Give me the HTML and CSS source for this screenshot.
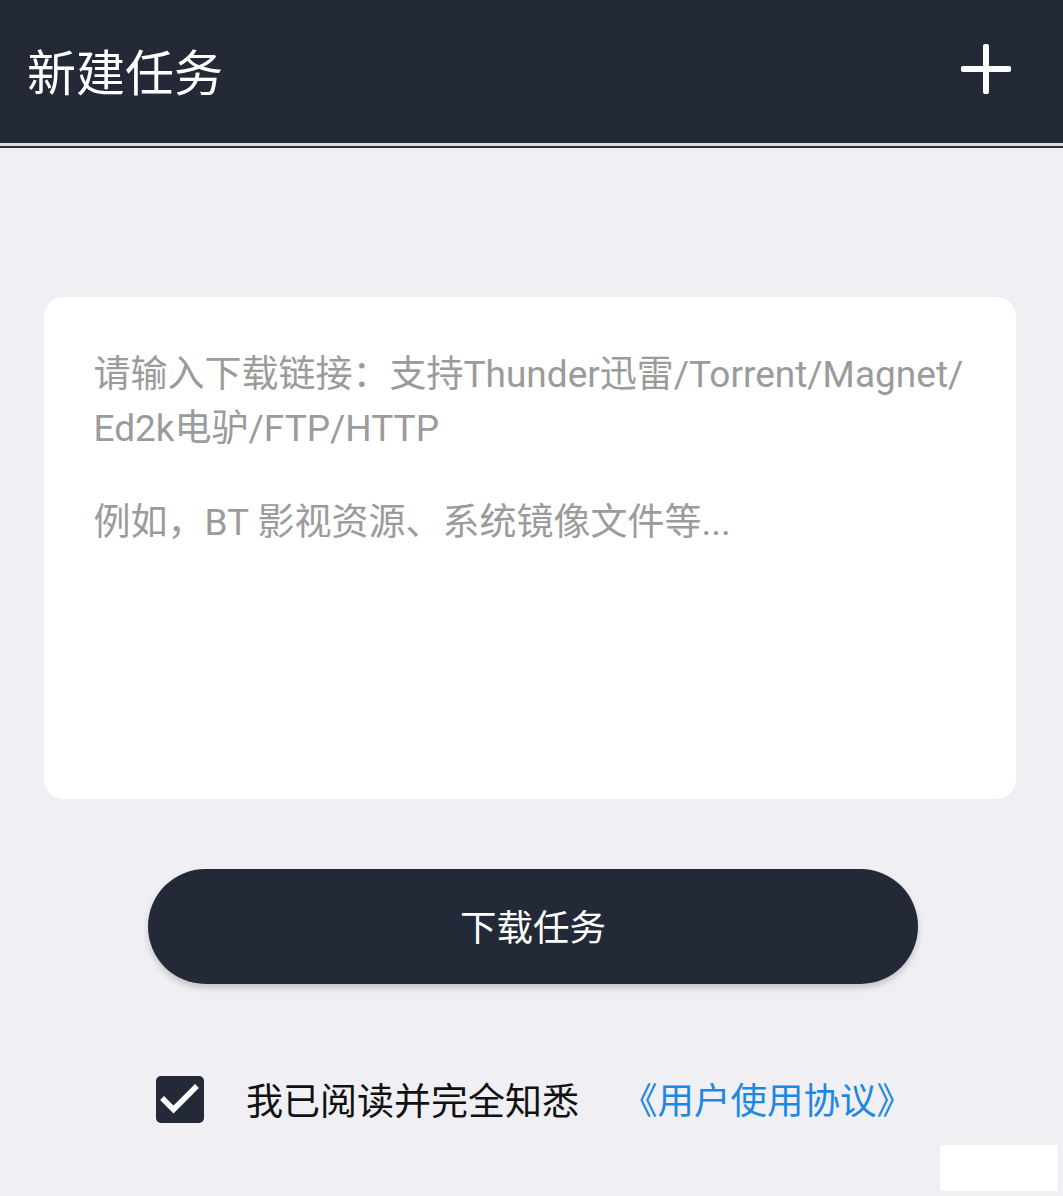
FILE: index.html
```html
<!DOCTYPE html>
<html lang="zh-CN">
<head>
<meta charset="utf-8">
<title>新建任务</title>
<link rel="stylesheet" href="styles.css">
</head>
<body>
<header class="topbar">
  <h1 class="title">新建任务</h1>
  <button class="add-btn" aria-label="添加">
    <svg width="50" height="50" viewBox="0 0 50 50"><path d="M25 2.5V47.5M2.5 25H47.5" stroke="#fff" stroke-width="6" stroke-linecap="round" fill="none"/></svg>
  </button>
</header>
<div class="divider"></div>
<main class="content">
  <div class="card">
    <p class="hint">请输入下载链接：支持Thunder迅雷/Torrent/Magnet/<br>Ed2k电驴/FTP/HTTP</p>
    <p class="hint example">例如，BT 影视资源、系统镜像文件等...</p>
  </div>
  <button class="download-btn">下载任务</button>
  <div class="agree">
    <span class="checkbox">
      <svg width="48" height="47" viewBox="0 0 48 47"><path d="M8 24L17.5 33.5L39 12" stroke="#fff" stroke-width="5.5" stroke-linecap="square" stroke-linejoin="miter" fill="none"/></svg>
    </span>
    <span class="agree-text">我已阅读并完全知悉</span>
    <a class="agree-link" href="#">《用户使用协议》</a>
  </div>
</main>
<div class="corner-patch"></div>
</body>
</html>
```

FILE: styles.css
```css
html, body {
  margin: 0;
  padding: 0;
}
body {
  width: 1063px;
  height: 1196px;
  overflow: hidden;
  background: #f0eff4;
  font-family: Roboto, "Noto Sans CJK SC", sans-serif;
  position: relative;
}
.topbar {
  height: 143px;
  background: #232937;
  display: flex;
  align-items: center;
  justify-content: space-between;
  padding: 0 52px 0 27px;
  box-sizing: border-box;
}
.title {
  margin: 0;
  color: #fff;
  font-family: "Noto Sans CJK SC", sans-serif;
  font-weight: 400;
  font-size: 49px;
  line-height: 1;
  padding-bottom: 4px;
}
.add-btn {
  width: 50px;
  height: 50px;
  padding: 0;
  border: none;
  background: none;
  display: flex;
  margin-top: -6px;
}
.divider {
  height: 3px;
  background: #dcdce1;
  border-bottom: 2px solid #2b2f38;
}
.content {
  display: flex;
  flex-direction: column;
  align-items: center;
  padding-top: 149px;
}
.card {
  width: 972px;
  height: 502px;
  box-sizing: border-box;
  margin-left: -4px;
  background: #fff;
  border-radius: 20px;
  padding: 51px 30px 0 50px;
}
.hint {
  margin: 0;
  color: #9b9b9b;
  font-size: 37px;
  line-height: 54px;
}
.example {
  margin-top: 40px;
}
.download-btn {
  margin-top: 70px;
  width: 770px;
  height: 115px;
  margin-left: 3px;
  border: none;
  border-radius: 58px;
  background: #232937;
  color: #fff;
  font-family: "Noto Sans CJK SC", sans-serif;
  font-size: 36.5px;
  box-shadow: 0 4px 6px rgba(0, 0, 0, 0.18);
  padding: 0 0 2px;
}
.agree {
  margin-top: 92px;
  display: flex;
  align-items: center;
  margin-left: 6px;
}
.checkbox {
  width: 48px;
  height: 47px;
  border-radius: 5px;
  background: #232937;
  display: flex;
}
.agree-text {
  margin-left: 42px;
  font-family: "Noto Sans CJK SC", sans-serif;
  font-size: 37px;
  color: #111;
  line-height: 1;
}
.agree-link {
  margin-left: 42px;
  font-family: "Noto Sans CJK SC", sans-serif;
  font-size: 36.5px;
  color: #1d88e2;
  text-decoration: none;
  line-height: 1;
}
.corner-patch {
  position: absolute;
  left: 940px;
  top: 1145px;
  width: 118px;
  height: 46px;
  background: #fff;
}
```
